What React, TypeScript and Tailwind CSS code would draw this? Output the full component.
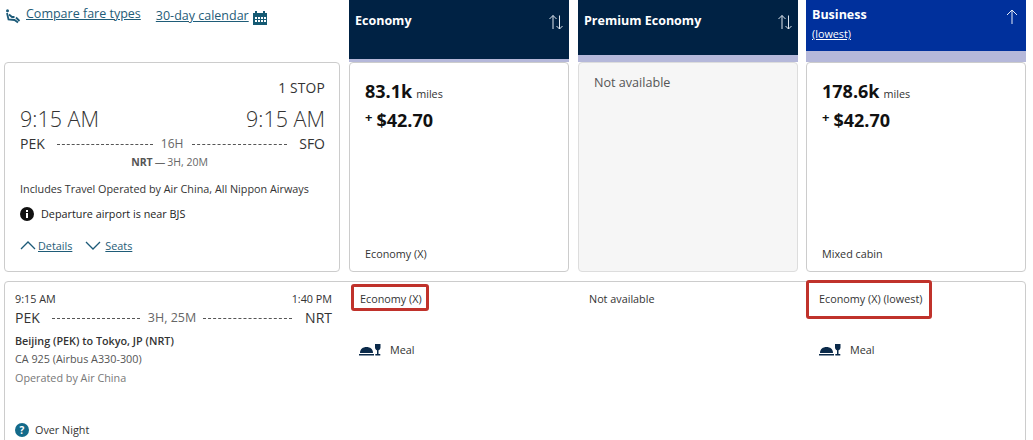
import React from "react";

const font = { fontFamily: '"Open Sans", "Liberation Sans", sans-serif' };

function Dash({ w, ml }: { w: string; ml: string }) {
  return <span className={`${w} ${ml} border-t border-dashed border-[#555] h-0`} />;
}

function SortIcon() {
  return (
    <svg width="16" height="16" viewBox="0 0 16 16" fill="none" stroke="#dfe6ef" strokeWidth="1">
      <path d="M5 15V1.500M1.500 5 5 1.500 8.500 5" />
      <path d="M11.500 1.500V15M8.500 12l3 3 3-3" />
    </svg>
  );
}

function UpIcon() {
  return (
    <svg width="12" height="15" viewBox="0 0 12 15" fill="none" stroke="#e6ecf8" strokeWidth="1">
      <path d="M6 15V1M1 6l5-5 5 5" />
    </svg>
  );
}

function Meal() {
  return (
    <div className="flex items-center gap-[9px] text-[10.800px] text-[#333]">
      <svg width="22" height="13" viewBox="0 0 22 13" fill="#0b2a4a">
        <path d="M1 9c0-4 3-6 6.500-6S14 5 14 9z" />
        <rect x="0" y="10" width="15" height="1.500" />
        <path d="M16 0h5.500v3.500c0 1.600-1 2.500-2 2.700V10h1.800v1.500h-5V10H18V6.200c-1-.2-2-1.100-2-2.700z" />
      </svg>
      <span>Meal</span>
    </div>
  );
}

function Price({ miles }: { miles: string }) {
  return (
    <>
      <div className="flex items-baseline gap-[4px]">
        <span className="text-[18px] leading-[26px] font-bold text-[#111]">{miles}</span>
        <span className="text-[10.800px] leading-[14px] text-[#333]">miles</span>
      </div>
      <div className="flex items-start mt-[3px] text-[#111]">
        <span className="text-[13px] font-bold leading-[20px] mr-[4px]">+</span>
        <span className="text-[18px] leading-[26px] font-bold">$42.70</span>
      </div>
    </>
  );
}

export default function App() {
  return (
    <div style={font} className="w-[1033px] h-[440px] overflow-hidden bg-white relative">
      <div className="flex pl-[4px]">
        <div className="w-[336px] mr-[9px]">
          <div className="h-[62px] flex items-start pt-[5px] text-[#1d5f7a]">
            <svg width="16" height="15" viewBox="0 0 16 15" className="mt-[4px] ml-[1px] mr-[5px]" fill="none" stroke="#1c5a78" strokeWidth="1.800">
              <circle cx="2.500" cy="1.800" r="1.500" fill="#1c5a78" stroke="none" />
              <path d="M2 4l1.500 6.500 6 .5 3.500 2.500" />
              <path d="M4 5.500l3 2.500 2.500 0" />
              <path d="M11 8.500l3.500 3.500" />
            </svg>
            <a className="text-[12.500px] leading-[17px] underline text-[#1f5c78] mr-[15px]">Compare fare types</a>
            <a className="text-[12.500px] leading-[17px] underline text-[#1f5c78] mt-[2px] mr-[4px]">30-day calendar</a>
            <svg width="14" height="14" viewBox="0 0 14 14" className="mt-[6px]">
              <path fill="#155a73" d="M0 2h2V0h2v2h6V0h2v2h2v12H0z" />
              <path fill="#fff" d="M2 6h2v2H2zM5 6h2v2H5zM8 6h2v2H8zM11 6h2v2h-2zM2 9h2v2H2zM5 9h2v2H5zM8 9h2v2H8zM11 9h2v2h-2z" />
            </svg>
          </div>
          <div className="h-[210px] border border-[#ccc] rounded-[4px] pl-[15px] pr-[14px] pt-[16px] text-[#333]">
            <div className="text-right text-[13.800px] leading-[18px] tracking-[0.2px]">1 STOP</div>
            <div className="flex justify-between text-[21.500px] leading-[30px] font-light mt-[7px] text-[#333]">
              <span>9:15 AM</span>
              <span>9:15 AM</span>
            </div>
            <div className="flex items-center text-[14px] leading-[18px] mt-[1px]">
              <span>PEK</span>
              <Dash w="w-[96px]" ml="ml-[12px]" />
              <span className="ml-[8px] text-[#666] text-[12px]">16H</span>
              <Dash w="w-[95px]" ml="ml-[9px]" />
              <span className="ml-auto">SFO</span>
            </div>
            <div className="text-center text-[10.500px] leading-[15px] mt-[2px] mr-[6px] text-[#666]">
              <b className="text-[#555]">NRT</b><span className="mx-[2px]">—</span>3H, 20M
            </div>
            <div className="text-[10.800px] leading-[15px] mt-[11px] text-[#333]">Includes Travel Operated by Air China, All Nippon Airways</div>
            <div className="flex items-center text-[10.800px] leading-[15px] mt-[10px] text-[#222]">
              <svg width="14" height="14" viewBox="0 0 14 14" className="mr-[7px]">
                <circle cx="7" cy="7" r="7" fill="#111" />
                <rect x="6" y="6" width="2" height="5" fill="#fff" />
                <rect x="6" y="3" width="2" height="2" fill="#fff" />
              </svg>
              <span>Departure airport is near BJS</span>
            </div>
            <div className="flex items-center mt-[17px] text-[10.800px] leading-[15px] text-[#1f5c78]">
              <svg width="16" height="9" viewBox="0 0 16 9" fill="none" stroke="#1c5a78" strokeWidth="1.300" className="mr-[2px]"><path d="M1 8l7-7 7 7" /></svg>
              <a className="underline mr-[13px]">Details</a>
              <svg width="16" height="9" viewBox="0 0 16 9" fill="none" stroke="#1c5a78" strokeWidth="1.300" className="mr-[4px]"><path d="M1 1l7 7 7-7" /></svg>
              <a className="underline">Seats</a>
            </div>
          </div>
        </div>

        <div className="w-[220px] mr-[9px] flex flex-col">
          <div className="h-[59px] bg-[#002244] flex justify-between pl-[6px] pr-[5px] pt-[12px]">
            <span className="text-[12.500px] leading-[17px] font-bold text-white">Economy</span>
            <span className="mt-[2px]"><SortIcon /></span>
          </div>
          <div className="h-[3px] bg-[#b5b8da]" />
          <div className="h-[210px] border border-[#ccc] rounded-[4px] px-[15px] pt-[15px] flex flex-col">
            <Price miles="83.1k" />
            <div className="mt-auto mb-[10px] text-[10.800px] leading-[15px] text-[#333]">Economy (X)</div>
          </div>
        </div>

        <div className="w-[220px] mr-[8px] flex flex-col">
          <div className="h-[55px] bg-[#002244] flex justify-between pl-[6px] pr-[5px] pt-[12px]">
            <span className="text-[12.500px] leading-[17px] font-bold text-white">Premium Economy</span>
            <span className="mt-[2px]"><SortIcon /></span>
          </div>
          <div className="h-[7px] bg-[#b5b8da]" />
          <div className="h-[210px] border border-[#ddd] rounded-[4px] bg-[#f6f6f6] px-[15px] pt-[12px]">
            <div className="text-[12.600px] leading-[16px] text-[#555]">Not available</div>
          </div>
        </div>

        <div className="w-[220px] flex flex-col">
          <div className="h-[51px] bg-[#00309c] flex justify-between pl-[6px] pr-[8px] pt-[6px]">
            <div className="text-white">
              <div className="text-[12.500px] leading-[17px] font-bold">Business</div>
              <div className="text-[10.800px] leading-[15px] underline mt-[3px]">(lowest)</div>
            </div>
            <span className="mt-[3px]"><UpIcon /></span>
          </div>
          <div className="h-[11px] bg-[#b5b8da]" />
          <div className="h-[210px] border border-[#ccc] rounded-[4px] px-[15px] pt-[15px] flex flex-col">
            <Price miles="178.6k" />
            <div className="mt-auto mb-[10px] text-[10.800px] leading-[15px] text-[#333]">Mixed cabin</div>
          </div>
        </div>
      </div>

      <div className="mt-[9px] ml-[4px] w-[1022px] h-[170px] border border-[#ccc] rounded-[4px] flex">
        <div className="w-[317px] ml-[10px] pt-[9px] text-[#333] shrink-0">
          <div className="flex justify-between text-[10.800px] leading-[15px] text-[#333]">
            <span>9:15 AM</span>
            <span>1:40 PM</span>
          </div>
          <div className="flex items-center text-[14px] leading-[18px] mt-[3px]">
            <span>PEK</span>
            <Dash w="w-[88px]" ml="ml-[12px]" />
            <span className="ml-[8px] text-[#666] text-[12.500px]">3H, 25M</span>
            <Dash w="w-[89px]" ml="ml-[7px]" />
            <span className="ml-auto">NRT</span>
          </div>
          <div className="text-[10.800px] leading-[15px] font-semibold mt-[6px] text-[#333]">Beijing (PEK) to Tokyo, JP (NRT)</div>
          <div className="text-[10.800px] leading-[15px] mt-[3px] text-[#555]">CA 925 (Airbus A330-300)</div>
          <div className="text-[10.800px] leading-[15px] mt-[4px] text-[#777]">Operated by Air China</div>
          <div className="flex items-center mt-[37px] text-[10.800px] leading-[15px] text-[#333]">
            <span className="w-[14px] h-[14px] rounded-full bg-[#136a8a] text-white text-[10px] leading-[14px] font-bold text-center mr-[6px]">?</span>
            <span>Over Night</span>
          </div>
        </div>

        <div className="w-[238px] ml-[19px] pt-[2px] shrink-0">
          <div className="w-[78px] h-[27px] border-[3px] border-[#c0322b] rounded-[3px] flex items-center pl-[6px] pt-[3px] text-[10.800px] text-[#333] whitespace-nowrap">Economy (X)</div>
          <div className="mt-[31px] ml-[8px]"><Meal /></div>
        </div>

        <div className="w-[217px] pt-[9px] text-[10.800px] leading-[15px] text-[#333] shrink-0">Not available</div>

        <div className="mt-[-2px]">
          <div className="w-[126px] h-[39px] border-[3px] border-[#c0322b] rounded-[3px] flex items-center pl-[10px] text-[10.800px] text-[#333] whitespace-nowrap">Economy (X) (lowest)</div>
          <div className="mt-[23px] ml-[13px]"><Meal /></div>
        </div>
      </div>
    </div>
  );
}
